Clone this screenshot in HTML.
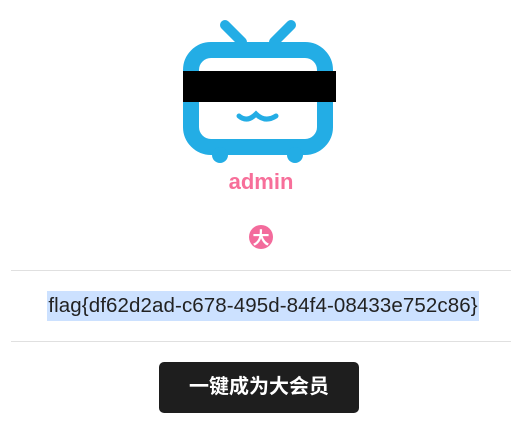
<!DOCTYPE html>
<html><head><meta charset="utf-8"><style>
body{margin:0;width:522px;height:424px;background:#fff;position:relative;font-family:"Liberation Sans","Noto Sans CJK SC",sans-serif;overflow:hidden}
.a{position:absolute}
</style></head><body>
<svg class="a" style="left:0;top:0" width="522" height="260">
<g stroke="#23ade5" stroke-linecap="round" fill="none">
<line x1="225" y1="25" x2="242" y2="42" stroke-width="10"/>
<line x1="291" y1="25" x2="274" y2="42" stroke-width="10"/>
<rect x="191" y="50" width="134" height="97" rx="20" stroke-width="16"/>
<path d="M239 116 Q247 123 256 114 Q265 123 276 116" stroke-width="5"/>
</g>
<circle cx="220" cy="155" r="8" fill="#23ade5"/>
<circle cx="295" cy="155" r="8" fill="#23ade5"/>
<rect x="183" y="71" width="153" height="31" fill="#000"/>
<circle cx="261" cy="237" r="12" fill="#f36b9c"/>
<text x="261" y="244" text-anchor="middle" font-size="17" font-weight="bold" fill="#fff" font-family="Noto Sans CJK SC,sans-serif">大</text>
</svg>
<div class="a" style="left:0;width:522px;top:169px;text-align:center;color:#f76f9a;font-size:22px;font-weight:bold">admin</div>
<div class="a" style="left:11px;width:500px;top:270px;height:1px;background:#e0e0e0"></div>
<div class="a" style="left:11px;width:500px;top:341px;height:1px;background:#e0e0e0"></div>
<div class="a" style="left:47px;width:432px;top:291px;height:30px;background:#cce1ff"></div>
<div class="a" style="left:27px;width:472px;top:292px;text-align:center;font-size:20.5px;color:#222;line-height:28px;letter-spacing:0.1px">flag{df62d2ad-c678-495d-84f4-08433e752c86}</div>
<div class="a" style="left:159px;top:362px;width:200px;height:51px;background:#1e1e1e;border-radius:5px;color:#fff;font-weight:bold;font-size:20px;line-height:51px;text-align:center">一键成为大会员</div>
</body></html>
